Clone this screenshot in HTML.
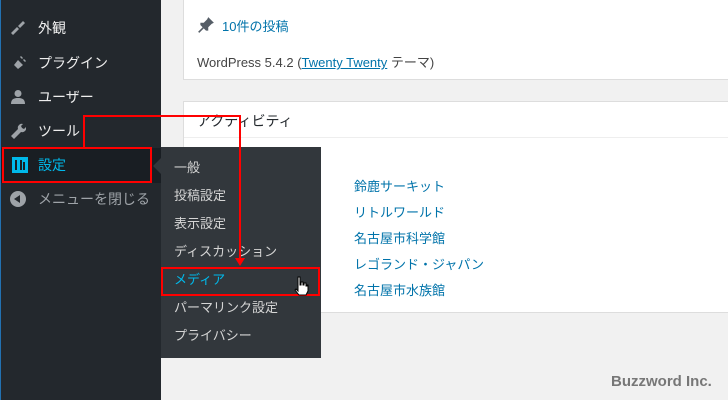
<!DOCTYPE html>
<html><head><meta charset="utf-8"><style>
*{margin:0;padding:0;box-sizing:border-box}
body{width:728px;height:400px;overflow:hidden;background:#f1f1f1;font-family:"Liberation Sans","Noto Sans CJK JP",sans-serif;position:relative}
.a{position:absolute;white-space:nowrap}
#sb{left:0;top:0;width:161px;height:400px;background:#23282d;border-left:1px solid #2271b1}
.mi{position:absolute;left:38px;font-size:14px;color:#eee;line-height:16px}
.ic{position:absolute;left:10px;width:16px;height:16px}
.sub{position:absolute;left:174px;font-size:13px;color:#d5d5d5;line-height:16px}
.lk{position:absolute;left:354px;font-size:13px;color:#0073aa;line-height:16px}
.card{position:absolute;left:183px;width:560px;background:#fff;border:1px solid #ddd}
</style></head><body>
<div class="card" style="top:-2px;height:82px"></div>
<div class="a" style="left:197px;top:16px;width:18px;height:18px"><svg width="18" height="18" viewBox="0 0 16 16"><path d="M10 1l5 5-2 1-3 3 0 3-2 0-2-2-4 4-1-1 4-4-2-2 0-2 3 0 3-3z" fill="#555d66"/></svg></div>
<div class="a" style="left:222px;top:16px;font-size:13px;color:#0073aa">10件の投稿</div>
<div class="a" style="left:197px;top:52px;font-size:13px;color:#444">WordPress 5.4.2 (<span style="color:#0073aa;text-decoration:underline">Twenty Twenty</span> テーマ)</div>
<div class="card" style="top:101px;height:212px"></div>
<div class="a" style="left:184px;top:137px;width:544px;height:1px;background:#eee"></div>
<div class="a" style="left:197px;top:111px;font-size:14px;color:#23282d">アクティビティ</div>
<div class="lk" style="top:179px">鈴鹿サーキット</div>
<div class="lk" style="top:205px">リトルワールド</div>
<div class="lk" style="top:231px">名古屋市科学館</div>
<div class="lk" style="top:257px">レゴランド・ジャパン</div>
<div class="lk" style="top:283px">名古屋市水族館</div>
<div class="a" style="left:611px;top:373px;font-size:15px;font-weight:bold;color:#777">Buzzword Inc.</div>

<div class="a" id="sb"></div>
<svg class="ic" style="top:20px" viewBox="0 0 16 16"><path d="M1 13l6-6 2 2-6 6zM8 6l5-5 2 2-5 5z" fill="#9ea3a8"/></svg>
<div class="mi" style="top:20px">外観</div>
<svg class="ic" style="top:55px" viewBox="0 0 16 16"><path d="M3 15l3-3-2-2 4-5 5 5-5 4-2-2-3 3zM10 2l1-1 2 2-1 1zM13 5l1-1 2 2-1 1z" fill="#9ea3a8"/></svg>
<div class="mi" style="top:55px">プラグイン</div>
<svg class="ic" style="top:89px" viewBox="0 0 16 16"><circle cx="8" cy="4.5" r="3.5" fill="#9ea3a8"/><path d="M1 15c0-5 3-6 7-6s7 1 7 6z" fill="#9ea3a8"/></svg>
<div class="mi" style="top:89px">ユーザー</div>
<svg class="ic" style="top:123px" viewBox="0 0 16 16"><path d="M1 13l7-7a4 4 0 015-5l-2 2 1 2 2 1 2-2a4 4 0 01-5 5l-7 7z" fill="#9ea3a8"/></svg>
<div class="mi" style="top:123px">ツール</div>
<div class="a" style="left:1px;top:148px;width:160px;height:35px;background:#191e23"></div>
<div class="a" style="left:12px;top:157px;width:16px;height:16px;background:#00b9eb"></div>
<div class="a" style="left:15px;top:160px;width:2px;height:10px;background:#191e23"></div>
<div class="a" style="left:20px;top:160px;width:2px;height:10px;background:#191e23"></div>
<div class="a" style="left:23px;top:162px;width:2px;height:8px;background:#191e23"></div>
<div class="mi" style="top:157px;color:#00b9eb">設定</div>
<div class="a" style="left:10px;top:191px;width:16px;height:16px;border-radius:50%;background:#9ea3a8"></div>
<div class="a" style="left:14px;top:195px;width:0;height:0;border-top:4px solid transparent;border-bottom:4px solid transparent;border-right:6px solid #23282d"></div>
<div class="mi" style="top:191px;color:#9ea3a8">メニューを閉じる</div>

<div class="a" style="left:161px;top:147px;width:160px;height:211px;background:#32373c"></div>
<div class="a" style="left:153px;top:158px;width:0;height:0;border-top:8px solid transparent;border-bottom:8px solid transparent;border-right:8px solid #32373c"></div>
<div class="sub" style="top:160px">一般</div>
<div class="sub" style="top:188px">投稿設定</div>
<div class="sub" style="top:216px">表示設定</div>
<div class="sub" style="top:244px">ディスカッション</div>
<div class="sub" style="top:272px;color:#00b9eb">メディア</div>
<div class="sub" style="top:300px">パーマリンク設定</div>
<div class="sub" style="top:328px">プライバシー</div>

<div class="a" style="left:2px;top:147px;width:150px;height:36px;border:2px solid #f00"></div>
<div class="a" style="left:161px;top:267px;width:159px;height:29px;border:2px solid #f00"></div>
<div class="a" style="left:83px;top:115px;width:2px;height:32px;background:#f00"></div>
<div class="a" style="left:83px;top:115px;width:158px;height:2px;background:#f00"></div>
<div class="a" style="left:239px;top:115px;width:2px;height:145px;background:#f00"></div>
<div class="a" style="left:235px;top:258px;width:0;height:0;border-left:5px solid transparent;border-right:5px solid transparent;border-top:8px solid #f00"></div>
<svg class="a" style="left:293px;top:276px" width="16" height="20" viewBox="0 0 16 20"><path d="M5 1h2v8h1V6h2v3h1V7h2v3h1V9h1v6l-2 4H6l-4-5 1-1 2 2z" fill="#fff" stroke="#000" stroke-width="1"/></svg>
</body></html>
